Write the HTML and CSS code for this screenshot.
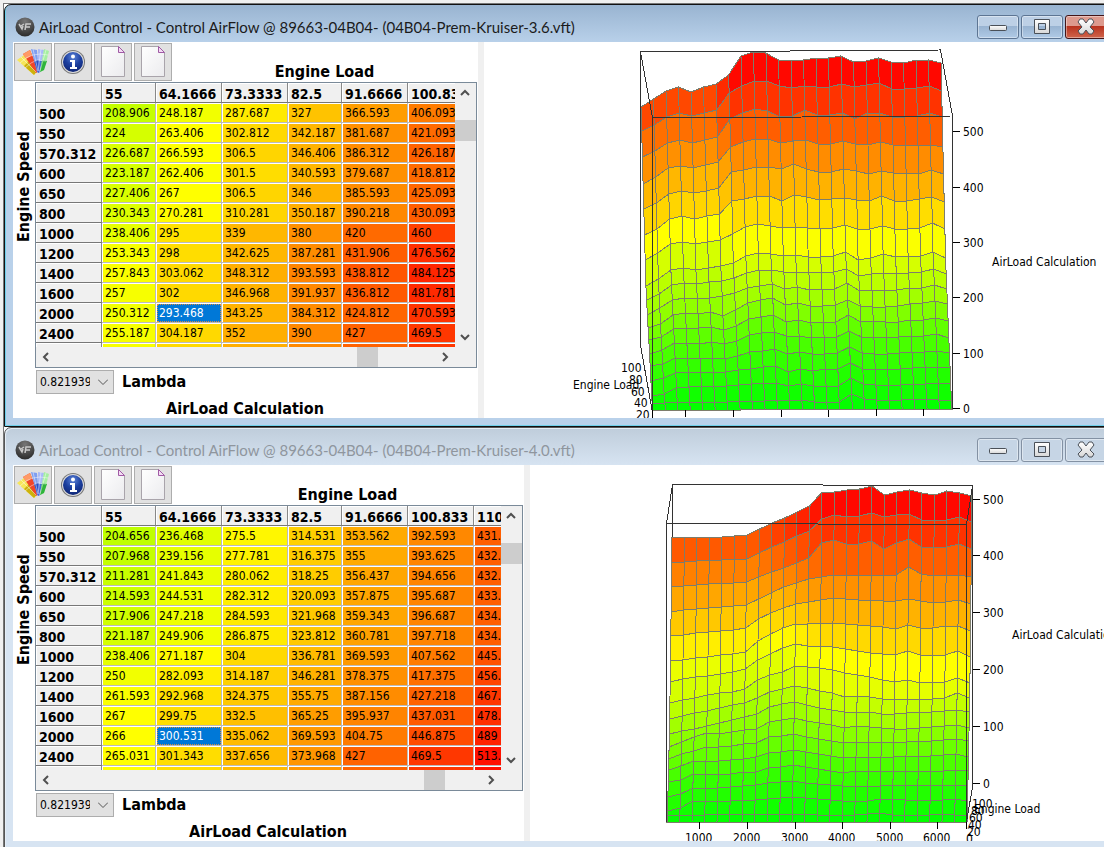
FILE: index.html
```
<!DOCTYPE html>
<html lang="en">
<head>
  <meta charset="utf-8">
  <title>AirLoad Control</title>
  <link rel="stylesheet" href="styles.css">
</head>
<body>
  <!-- shared icons -->
  <svg class="defs" width="0" height="0" aria-hidden="true">
    <defs>
      <radialGradient id="ballFill" cx="0.5" cy="0.2" r="0.9">
        <stop offset="0" stop-color="#777"/>
        <stop offset="1" stop-color="#222"/>
      </radialGradient>
      <radialGradient id="infoFill" cx="0.5" cy="0.25" r="0.8">
        <stop offset="0" stop-color="#5d84d8"/>
        <stop offset="0.5" stop-color="#1c3f9f"/>
        <stop offset="1" stop-color="#0e2370"/>
      </radialGradient>
      <linearGradient id="pageFill" x1="0" y1="0" x2="1" y2="1">
        <stop offset="0" stop-color="#fff"/>
        <stop offset="1" stop-color="#ebebee"/>
      </linearGradient>
      <linearGradient id="glyphFill" x1="0" y1="0" x2="0" y2="1">
        <stop offset="0" stop-color="#fff"/>
        <stop offset="1" stop-color="#d8d8d8"/>
      </linearGradient>
      <symbol id="ball" viewBox="0 0 20 20">
        <circle cx="10" cy="10" r="9.5" fill="url(#ballFill)"/>
        <path d="M4 7l3 5 1-3M6 9l3-2M10 13l1-6h5M11 10h4" fill="none" stroke="#c9c9c9" stroke-width="1.5"/>
      </symbol>
      <symbol id="fan" viewBox="0 0 32 28">
        <path d="M0 12L7 7l14 15-4 5z" fill="#f6e65a"/>
        <path d="M7 18l5-5 9 9-4 5z" fill="#cdb20c"/>
        <path d="M6 6l7-4 9 21-3 2z" fill="#f0462a"/>
        <path d="M6 6l7-4 2 5-6 4z" fill="#ff9a66"/>
        <path d="M14 1l6 1 2 23-2-1z" fill="#7f9ef0"/>
        <path d="M17 13l4-1 1 12-1 1z" fill="#2b52c4"/>
        <path d="M21 1l6 1-4 23-2-1z" fill="#a9b9f7"/>
        <path d="M21 12l4 1-3 12-1-1z" fill="#4669d6"/>
        <path d="M27 1l5 2-5 19-4 2z" fill="#a5efa0"/>
        <path d="M25 12l5 1-3 9-4 2z" fill="#2fb43a"/>
        <path d="M4 9l15 15M16 1l5 22M24 1l-3 22M29 2l-6 21M3 15l6-5 7-3 7-1 8 1M8 20l6-5 6-3 9 1" stroke="#fff" stroke-opacity="0.45" fill="none"/>
      </symbol>
      <symbol id="info" viewBox="0 0 26 26">
        <circle cx="13" cy="13" r="12" fill="#777"/>
        <circle cx="13" cy="13" r="11" fill="#ddd"/>
        <circle cx="13" cy="13" r="10" fill="url(#infoFill)"/>
        <circle cx="13" cy="7.500" r="2" fill="#fff"/>
        <path d="M10 11h5v7h2v2h-7v-2h2v-5h-2z" fill="#fff"/>
      </symbol>
      <symbol id="page" viewBox="0 0 24 32">
        <path d="M0.500 0.500h17l6 6v24h-23z" fill="url(#pageFill)" stroke="#a9a4ab"/>
        <path d="M17.500 0.500v6h6z" fill="#f3dcf3" stroke="#a05aa5"/>
      </symbol>
      <symbol id="min" viewBox="0 0 18 18">
        <rect x="0.500" y="7.500" width="17" height="5" rx="1" fill="url(#glyphFill)" stroke="#4a5058"/>
      </symbol>
      <symbol id="max" viewBox="0 0 18 18">
        <path d="M1.500 1.500h15v14h-15zM5.500 5.500v6h7v-6z" fill="url(#glyphFill)" stroke="#4a5058" fill-rule="evenodd"/>
      </symbol>
      <symbol id="close" viewBox="0 0 18 18">
        <path d="M1 4l2-3h3l3 4 3-4h3l2 3-4 5 4 4-2 3h-3l-3-4-3 4H3l-2-3 4-4z" fill="url(#glyphFill)" stroke="#4a5058"/>
      </symbol>
      <symbol id="arrow" viewBox="0 0 10 10">
        <path d="M7 1L3 5l4 4" fill="none" stroke="#505050" stroke-width="2"/>
      </symbol>
    </defs>
  </svg>

  <main class="desktop" id="desktop"></main>

  <template id="windowTemplate">
    <section class="window">
      <header class="titlebar">
        <svg class="app-icon"><use href="#ball"/></svg>
        <h1></h1>
        <div class="window-buttons">
          <button type="button" aria-label="Minimize"><svg><use href="#min"/></svg></button>
          <button type="button" aria-label="Maximize"><svg><use href="#max"/></svg></button>
          <button type="button" class="close" aria-label="Close"><svg><use href="#close"/></svg></button>
        </div>
      </header>
      <div class="client">
        <div class="map-pane">
          <div class="top-row">
            <div class="toolbar">
              <button type="button" aria-label="Colours"><svg width="32" height="28"><use href="#fan"/></svg></button>
              <button type="button" aria-label="Info"><svg width="26" height="26"><use href="#info"/></svg></button>
              <button type="button" aria-label="New page"><svg width="24" height="32"><use href="#page"/></svg></button>
              <button type="button" aria-label="Copy page"><svg width="24" height="32"><use href="#page"/></svg></button>
            </div>
            <h2>Engine Load</h2>
          </div>
          <div class="map-row">
            <div class="side-label"><span>Engine Speed</span></div>
            <div class="grid-box">
              <div class="grid-view"><table></table></div>
              <div class="scroll vertical">
                <button type="button" aria-label="Up"><svg class="up"><use href="#arrow"/></svg></button>
                <div class="track"><div class="thumb"></div></div>
                <button type="button" aria-label="Down"><svg class="down"><use href="#arrow"/></svg></button>
              </div>
              <div class="scroll horizontal">
                <button type="button" aria-label="Left"><svg><use href="#arrow"/></svg></button>
                <div class="track"><div class="thumb"></div></div>
                <button type="button" aria-label="Right"><svg class="right"><use href="#arrow"/></svg></button>
              </div>
            </div>
          </div>
          <div class="lambda-row">
            <div class="combo">
              <select><option>0.821939</option></select>
              <svg viewBox="0 0 10 6"><path d="M0 0.500l5 5 5-5" fill="none" stroke="#555"/></svg>
            </div>
            <label>Lambda</label>
          </div>
          <h2 class="map-name">AirLoad Calculation</h2>
        </div>
        <div class="splitter"></div>
        <div class="chart-pane"></div>
      </div>
    </section>
  </template>

  <script src="app.js"></script>
</body>
</html>
```
FILE: styles.css
```
* {
  box-sizing: border-box;
}

body {
  margin: 0;
  background: #f0f0f0;
  color: #000;
  font-family: "DejaVu Sans Condensed", "DejaVu Sans", sans-serif;
  font-size: 12px;
  overflow: hidden;
}

h1, h2 {
  margin: 0;
}

button {
  padding: 0;
  border: none;
  background: none;
}

svg {
  display: block;
}

.defs {
  position: absolute;
}

.desktop {
  margin: 3px 0 0 3px;
  border-top: 1px solid #777;
  border-left: 1px solid #777;
  background: #fff;
}

/* window frame */
.window {
  margin-right: -12px;
  padding: 0 8px 8px;
  border: 1px solid #111;
  border-radius: 7px 7px 0 0;
  background: linear-gradient(#99b4d1, #b9d1ea 38px);
  box-shadow: inset 1px -1px 0 #6fd0ea;
}

.window.inactive {
  background: linear-gradient(#bfcddb, #d7e4f2 38px);
  box-shadow: inset 1px 1px 0 #e6eef6;
  border-color: #555;
}

.titlebar {
  display: flex;
  align-items: center;
  height: 37px;
  padding: 7px 0 0 2px;
}

.app-icon {
  width: 20px;
  height: 20px;
}

.titlebar h1 {
  flex: 1;
  margin-left: 4px;
  font-family: Lato, "Open Sans", sans-serif;
  font-size: 15px;
  font-weight: normal;
  line-height: 24px;
  color: #1b1b1b;
  white-space: nowrap;
}

.inactive .titlebar h1 {
  color: #8f969e;
}

.window-buttons {
  display: flex;
  gap: 2px;
}

.window-buttons button {
  display: flex;
  align-items: center;
  justify-content: center;
  width: 42px;
  height: 24px;
  border: 1px solid #5d7593;
  border-radius: 3px;
  background: linear-gradient(#bdd0e6 45%, #98b3d1 46%, #b0cae6);
  box-shadow: inset 0 0 0 1px rgba(255, 255, 255, 0.4);
}

.window-buttons svg {
  width: 18px;
  height: 18px;
}

.window-buttons .close {
  border-color: #431518;
  background: linear-gradient(#dd9a8e 45%, #b8321e 46%, #d0654c);
}

.inactive .window-buttons button {
  border-color: #8391a3;
  background: #c6d5e5;
}

/* left pane */
.client {
  display: flex;
  height: 376px;
  background: #fff;
}

.map-pane {
  padding-right: 1px;
}

.top-row {
  display: flex;
  align-items: flex-end;
  height: 40px;
}

.toolbar {
  display: flex;
  gap: 2px;
  align-self: flex-start;
  padding: 1px 0 0 1px;
}

.toolbar button {
  display: flex;
  align-items: center;
  justify-content: center;
  width: 38px;
  height: 38px;
  border: 1px solid #adadad;
  background: #e1e1e1;
}

.top-row h2 {
  flex: 1;
  text-align: center;
}

h2, .lambda-row label, .side-label {
  font-size: 16px;
  line-height: 20px;
  font-weight: bold;
}

.map-row {
  display: flex;
}

.side-label {
  display: flex;
  justify-content: center;
  width: 22px;
  padding-top: 48px;
}

.side-label span {
  height: 112px;
  writing-mode: vertical-rl;
  transform: rotate(180deg);
  white-space: nowrap;
}

.grid-box {
  display: grid;
  grid-template-columns: auto 21px;
  grid-template-rows: 264px 20px;
  border: 1px solid #7a8a99;
  background: #f0f0f0;
}

.grid-view {
  width: 419px;
  overflow: hidden;
  background: #fff;
}

.wide .grid-view {
  width: 465px;
}

table {
  table-layout: fixed;
  width: 100%;
  border-collapse: separate;
  border-spacing: 0;
}

th, td {
  width: 66px;
  height: 20px;
  padding: 0 0 0 3px;
  text-align: left;
  white-space: nowrap;
  line-height: 18px;
}

th {
  padding-top: 3px;
  border-right: 1px solid #888;
  border-bottom: 1px solid #777;
  background: #f0f0f0;
  box-shadow: inset 1px 1px 0 #fff;
  font-size: 14px;
  line-height: 16px;
}

td {
  border-right: 1px solid #bbb;
  border-bottom: 1px solid #bbb;
  box-shadow: inset 1px 1px 0 #fff;
}

.narrow {
  width: 54px;
}

td.selected {
  outline: 1px dotted #d98e3a;
  outline-offset: -2px;
  background: #0078d7;
  color: #fff;
}

.scroll {
  display: flex;
}

.vertical {
  flex-direction: column;
}

.horizontal {
  height: 20px;
}

.scroll button {
  display: flex;
  align-items: center;
  justify-content: center;
  width: 20px;
  height: 20px;
}

.scroll svg {
  width: 10px;
  height: 10px;
}

.up {
  transform: rotate(90deg);
}

.down {
  transform: rotate(-90deg);
}

.right {
  transform: rotate(180deg);
}

.track {
  flex: 1;
}

.vertical .thumb {
  height: 21px;
  margin-top: 17px;
  background: #cdcdcd;
}

.horizontal .thumb {
  width: 21px;
  height: 20px;
  margin-left: 301px;
  background: #cdcdcd;
}

.wide .horizontal .thumb {
  margin-left: 368px;
}

.lambda-row {
  display: flex;
  align-items: center;
  gap: 8px;
  padding: 2px 0 0 23px;
}

.combo {
  position: relative;
}

.combo select {
  display: block;
  appearance: none;
  width: 78px;
  height: 24px;
  padding: 0 23px 0 3px;
  border: 1px solid #adadad;
  border-radius: 0;
  background: #e1e1e1;
  color: #000;
  font: inherit;
}

.combo svg {
  position: absolute;
  top: 9px;
  right: 6px;
  width: 10px;
  height: 6px;
}

.map-name {
  margin-top: 5px;
  text-align: center;
}

.splitter {
  width: 6px;
  background: #f0f0f0;
}

/* 3d chart */
.chart-pane {
  flex: 1;
  min-width: 0;
  overflow: hidden;
}

.chart-pane text {
  font-size: 12px;
}

.mesh path {
  stroke: #7d7d6c;
  stroke-width: 1;
  shape-rendering: crispEdges;
}

.frame {
  fill: none;
  stroke: #333;
  shape-rendering: crispEdges;
}

.ticks {
  fill: none;
  stroke: #000;
}
```
FILE: app.js
```
const columns = ['55', '64.1666', '73.3333', '82.5', '91.6666', '100.833', '110'];
const speeds = ['500', '550', '570.312', '600', '650', '800', '1000', '1200', '1400', '1600', '2000', '2400'];

// value -> hue, the same scale is used for all maps
const scale = [[200, 76], [250, 63], [265, 60], [295, 53], [327, 46], [350, 41], [380, 34],
  [406, 29], [420, 25], [460, 15], [484, 9], [515, 4]];

const windows = [
  {
    title: 'AirLoad Control - Control AirFlow @ 89663-04B04- (04B04-Prem-Kruiser-3.6.vft)',
    className: '',
    rows: [
      '208.906 248.187 287.687 327 366.593 406.093',
      '224 263.406 302.812 342.187 381.687 421.093',
      '226.687 266.593 306.5 346.406 386.312 426.187',
      '223.187 262.406 301.5 340.593 379.687 418.812',
      '227.406 267 306.5 346 385.593 425.093',
      '230.343 270.281 310.281 350.187 390.218 430.093',
      '238.406 295 339 380 420 460',
      '253.343 298 342.625 387.281 431.906 476.562',
      '257.843 303.062 348.312 393.593 438.812 484.125',
      '257 302 346.968 391.937 436.812 481.781',
      '250.312 293.468 343.25 384.312 424.812 470.593',
      '255.187 304.187 352 390 427 469.5'
    ],
    chart: {
      origin: [484, 42],
      left: [641, 653],
      right: [941, 952],
      blend: [5, 7],
      hues: [[17, 2], [26, 12], [34, 22], [43, 33], [50, 42], [60, 52], [70, 61], [76, 70], [81, 76],
        [86, 82], [92, 90], [98, 97], [103, 103], [108, 108], [112, 112], [116, 116], [119, 119]],
      mesh: [
        [107, 99, 91, 87, 92, 87, 84, 75, 56, 52, 53, 60, 60, 60, 58, 58, 56, 62, 61, 58, 62, 63, 60, 60, 63],
        [131, 125, 117, 113, 116, 113, 110, 93, 86, 81, 81, 86, 88, 86, 87, 87, 84, 87, 85, 83, 89, 89, 88, 86, 91],
        [157, 151, 143, 140, 143, 140, 137, 119, 113, 109, 111, 117, 116, 110, 115, 115, 113, 119, 113, 113, 117, 117, 116, 113, 117],
        [184, 177, 168, 166, 168, 165, 162, 147, 142, 139, 139, 143, 141, 140, 144, 144, 141, 144, 145, 142, 145, 145, 145, 145, 147],
        [209, 203, 194, 191, 193, 191, 188, 172, 170, 167, 167, 169, 164, 169, 172, 172, 169, 171, 174, 171, 173, 173, 174, 170, 174],
        [235, 229, 219, 216, 219, 216, 214, 201, 199, 196, 196, 201, 195, 197, 200, 199, 198, 200, 201, 196, 201, 201, 199, 197, 202],
        [260, 253, 244, 242, 244, 242, 240, 234, 227, 224, 226, 228, 227, 228, 228, 228, 225, 229, 229, 226, 229, 229, 228, 223, 229],
        [286, 279, 270, 268, 270, 268, 266, 263, 256, 253, 254, 256, 255, 257, 257, 256, 252, 260, 258, 254, 257, 256, 256, 252, 258],
        [300, 294, 285, 283, 284, 282, 281, 278, 273, 270, 270, 272, 272, 272, 273, 272, 269, 276, 274, 273, 273, 273, 272, 269, 274],
        [315, 308, 300, 298, 299, 298, 296, 293, 288, 286, 284, 289, 287, 290, 289, 289, 283, 291, 290, 290, 290, 288, 288, 285, 289],
        [328, 324, 315, 313, 314, 312, 316, 310, 303, 300, 298, 305, 303, 306, 306, 305, 300, 306, 307, 307, 306, 304, 303, 301, 304],
        [340, 337, 329, 328, 328, 327, 330, 326, 319, 317, 315, 322, 320, 323, 322, 322, 315, 322, 321, 322, 322, 320, 320, 318, 321],
        [354, 350, 343, 343, 344, 342, 344, 341, 335, 333, 332, 336, 336, 338, 337, 337, 331, 337, 337, 338, 337, 336, 336, 334, 338],
        [366, 364, 358, 358, 358, 358, 359, 356, 352, 351, 349, 354, 352, 354, 354, 353, 347, 353, 354, 354, 353, 352, 352, 351, 353],
        [381, 378, 373, 372, 372, 372, 372, 370, 369, 367, 366, 372, 369, 371, 369, 369, 363, 369, 369, 370, 369, 368, 367, 367, 368],
        [396, 394, 388, 387, 386, 386, 386, 385, 384, 383, 383, 386, 384, 386, 386, 386, 378, 384, 385, 385, 385, 384, 384, 383, 384],
        [404, 403, 402, 402, 402, 402, 402, 401, 401, 401, 400, 401, 400, 402, 402, 402, 394, 399, 400, 401, 400, 399, 399, 400, 400],
        [410, 410, 410, 410, 410, 410, 410, 410, 409, 409, 409, 409, 409, 409, 409, 409, 409, 409, 409, 409, 409, 409, 409, 409, 409]
      ],
      frame: 'M640.5 345V52L940.5 50L952.5 116V409M640.5 52L652.5 118V410M652.5 118L952.5 116M640.5 345L652 410',
      ticks: 'M953 131.5h7M953 187.5h7M953 242.5h7M953 297.5h7M953 353.5h7M953 408.5h7' +
        'M652.5 410v8M685.5 410v7M733.5 410v7M781.5 410v7M828.5 410v7M876.5 409v7M923.5 409v7',
      labels: [['500', 963, 136], ['400', 963, 192], ['300', 963, 247], ['200', 963, 302], ['100', 963, 358],
        ['0', 963, 413], ['AirLoad Calculation', 992, 266], ['Engine Load', 573, 389],
        ['100', 621, 372], ['80', 629, 384], ['60', 631, 396], ['40', 634, 407], ['20', 636, 419]]
    }
  },
  {
    title: 'AirLoad Control - Control AirFlow @ 89663-04B04- (04B04-Prem-Kruiser-4.0.vft)',
    className: 'inactive wide',
    rows: [
      '204.656 236.468 275.5 314.531 353.562 392.593 431.',
      '207.968 239.156 277.781 316.375 355 393.625 432.',
      '211.281 241.843 280.062 318.25 356.437 394.656 432.',
      '214.593 244.531 282.312 320.093 357.875 395.687 433.',
      '217.906 247.218 284.593 321.968 359.343 396.687 434.',
      '221.187 249.906 286.875 323.812 360.781 397.718 434.',
      '238.406 271.187 304 336.781 369.593 407.562 445.',
      '250 282.093 314.187 346.281 378.375 417.375 456.',
      '261.593 292.968 324.375 355.75 387.156 427.218 467.',
      '267 299.75 332.5 365.25 395.937 437.031 478.',
      '266 300.531 335.062 369.593 404.75 446.875 489',
      '265.031 301.343 337.656 373.968 427 469.5 513.'
    ],
    chart: {
      origin: [530, 465],
      left: [672, 667],
      right: [972, 967],
      blend: [6, 12],
      hues: [[21, 2], [30, 12], [39, 22], [47, 34], [56, 42], [65, 51], [70, 60], [76, 66], [82, 74],
        [87, 81], [92, 88], [97, 95], [103, 102], [108, 107], [112, 112], [116, 116], [119, 119]],
      mesh: [
        [537, 537, 537, 537, 537, 536, 535, 529, 523, 518, 512, 506, 492, 492, 490, 489, 486, 495, 492, 490, 493, 495, 491, 493, 496],
        [563, 562, 561, 560, 560, 559, 559, 553, 547, 542, 536, 531, 519, 515, 517, 516, 513, 517, 515, 514, 520, 521, 520, 517, 522],
        [587, 586, 585, 584, 583, 583, 582, 577, 572, 568, 563, 558, 543, 540, 544, 544, 541, 549, 543, 539, 547, 548, 547, 544, 549],
        [612, 610, 609, 608, 607, 606, 605, 599, 593, 587, 583, 579, 577, 575, 575, 575, 575, 575, 575, 567, 574, 576, 575, 575, 577],
        [636, 635, 633, 632, 631, 630, 628, 619, 613, 608, 604, 602, 600, 598, 599, 600, 600, 601, 601, 599, 601, 603, 602, 600, 604],
        [661, 660, 658, 657, 655, 654, 652, 641, 634, 628, 624, 624, 623, 623, 624, 625, 626, 627, 629, 625, 628, 628, 626, 626, 631],
        [682, 679, 677, 676, 674, 672, 669, 660, 654, 648, 644, 646, 646, 647, 649, 651, 653, 654, 655, 651, 655, 655, 655, 651, 657],
        [703, 700, 698, 695, 693, 692, 689, 680, 675, 672, 666, 667, 668, 670, 673, 675, 677, 680, 682, 680, 683, 682, 682, 678, 683],
        [719, 716, 713, 711, 708, 705, 703, 698, 692, 689, 686, 688, 691, 693, 697, 696, 697, 699, 699, 699, 699, 699, 698, 693, 698],
        [734, 731, 729, 726, 723, 720, 717, 714, 707, 704, 702, 705, 708, 710, 712, 712, 712, 714, 714, 713, 712, 712, 711, 710, 712],
        [747, 742, 737, 733, 734, 732, 730, 729, 722, 720, 718, 721, 723, 725, 728, 726, 727, 728, 729, 729, 728, 727, 726, 725, 728],
        [759, 754, 751, 747, 747, 746, 744, 743, 737, 736, 734, 737, 739, 741, 743, 742, 742, 742, 742, 742, 741, 741, 740, 739, 741],
        [770, 766, 761, 761, 761, 760, 759, 757, 753, 752, 750, 752, 754, 756, 758, 757, 757, 757, 757, 756, 756, 756, 755, 754, 757],
        [782, 780, 774, 774, 774, 774, 772, 772, 768, 767, 765, 767, 769, 771, 773, 771, 771, 771, 771, 771, 771, 771, 771, 770, 771],
        [797, 794, 788, 788, 788, 787, 786, 785, 783, 782, 781, 783, 784, 785, 786, 786, 786, 786, 785, 786, 785, 785, 785, 785, 786],
        [811, 808, 801, 801, 801, 801, 800, 800, 799, 798, 797, 798, 799, 800, 801, 801, 801, 799, 799, 800, 801, 800, 800, 799, 801],
        [816, 815, 815, 815, 814, 814, 814, 814, 815, 814, 814, 814, 815, 815, 815, 815, 814, 813, 815, 816, 815, 815, 814, 815, 815],
        [822, 822, 822, 822, 822, 822, 822, 822, 822, 822, 822, 822, 822, 822, 822, 822, 822, 822, 822, 822, 822, 822, 822, 822, 822]
      ],
      frame: 'M672.5 537V484.5L972.5 485.5V787L966.5 822V524.5L972.5 485.5M672.5 484.5L666.5 523.5V822M666.5 523.5L966.5 524.5',
      ticks: 'M973 499.5h7M973 555.5h7M973 612.5h7M973 669.5h7M973 726.5h7M973 783.5h7' +
        'M699.5 822v7M747.5 822v7M795.5 822v7M842.5 822v7M890.5 822v7M937.5 822v7M966.5 822v7',
      labels: [['500', 983, 504], ['400', 983, 560], ['300', 983, 617], ['200', 983, 674], ['100', 983, 731],
        ['0', 983, 788], ['AirLoad Calculation', 1012, 639], ['Engine Load', 974, 813],
        ['100', 972, 808], ['80', 971, 815], ['60', 969, 822], ['40', 968, 829], ['20', 967, 836],
        ['1000', 685, 842], ['2000', 733, 842], ['3000', 781, 842], ['4000', 828, 842], ['5000', 876, 842],
        ['6000', 923, 842], ['0', 966, 843]]
    }
  }
];

function cellColor(value) {
  let i = 1;
  while (i < scale.length - 1 && value > scale[i][0]) i++;
  const [v0, h0] = scale[i - 1];
  const [v1, h1] = scale[i];
  return 'hsl(' + Math.round(h0 + (h1 - h0) * (value - v0) / (v1 - v0)) + ', 100%, 50%)';
}

function buildTable(rows) {
  const cols = columns.slice(0, rows[0].split(' ').length);
  let html = '<thead><tr><th></th>';
  cols.forEach(c => {
    html += '<th scope="col"' + (c === '55' || c === '82.5' ? ' class="narrow"' : '') + '>' + c + '</th>';
  });
  html += '</tr></thead><tbody>';
  rows.forEach((row, r) => {
    html += '<tr><th scope="row">' + speeds[r] + '</th>';
    row.split(' ').forEach((v, c) => {
      if (r === 10 && c === 1) html += '<td class="selected">' + v + '</td>';
      else html += '<td style="background:' + cellColor(+v) + '">' + v + '</td>';
    });
    html += '</tr>';
  });
  // next row, only its top edge is in view
  html += '<tr><th></th>';
  rows[rows.length - 1].split(' ').forEach(v => {
    html += '<td style="background:' + cellColor(+v) + '"></td>';
  });
  return html + '</tr></tbody>';
}

function buildChart(chart) {
  const mesh = chart.mesh;
  const last = mesh.length - 1;
  const point = (r, c) => {
    const x0 = chart.left[0] + (chart.left[1] - chart.left[0]) * r / last;
    const x1 = chart.right[0] + (chart.right[1] - chart.right[0]) * r / last;
    return (x0 + (x1 - x0) * c / 24).toFixed(1) + ' ' + mesh[r][c];
  };
  let quads = '';
  for (let r = 0; r < last; r++) {
    for (let c = 0; c < 24; c++) {
      const t = Math.min(1, Math.max(0, (c - chart.blend[0]) / (chart.blend[1] - chart.blend[0])));
      const hue = chart.hues[r][0] + (chart.hues[r][1] - chart.hues[r][0]) * t;
      quads += '<path fill="hsl(' + hue.toFixed(0) + ',100%,50%)" d="M' + point(r, c) + 'L' + point(r, c + 1) +
        'L' + point(r + 1, c + 1) + 'L' + point(r + 1, c) + 'z"/>';
    }
  }
  const labels = chart.labels.map(l => '<text x="' + l[1] + '" y="' + l[2] + '">' + l[0] + '</text>').join('');
  return '<svg width="640" height="376" viewBox="' + chart.origin.join(' ') + ' 640 376">' +
    '<g class="mesh">' + quads + '</g><path class="frame" d="' + chart.frame + '"/>' +
    '<path class="ticks" d="' + chart.ticks + '"/>' + labels + '</svg>';
}

windows.forEach((w, i) => {
  const node = document.getElementById('windowTemplate').content.cloneNode(true);
  if (w.className) node.querySelector('.window').className += ' ' + w.className;
  node.querySelector('h1').textContent = w.title;
  node.querySelector('table').innerHTML = buildTable(w.rows);
  node.querySelector('select').id = 'lambda' + i;
  node.querySelector('label').htmlFor = 'lambda' + i;
  node.querySelector('.chart-pane').innerHTML = buildChart(w.chart);
  document.getElementById('desktop').appendChild(node);
});
```
